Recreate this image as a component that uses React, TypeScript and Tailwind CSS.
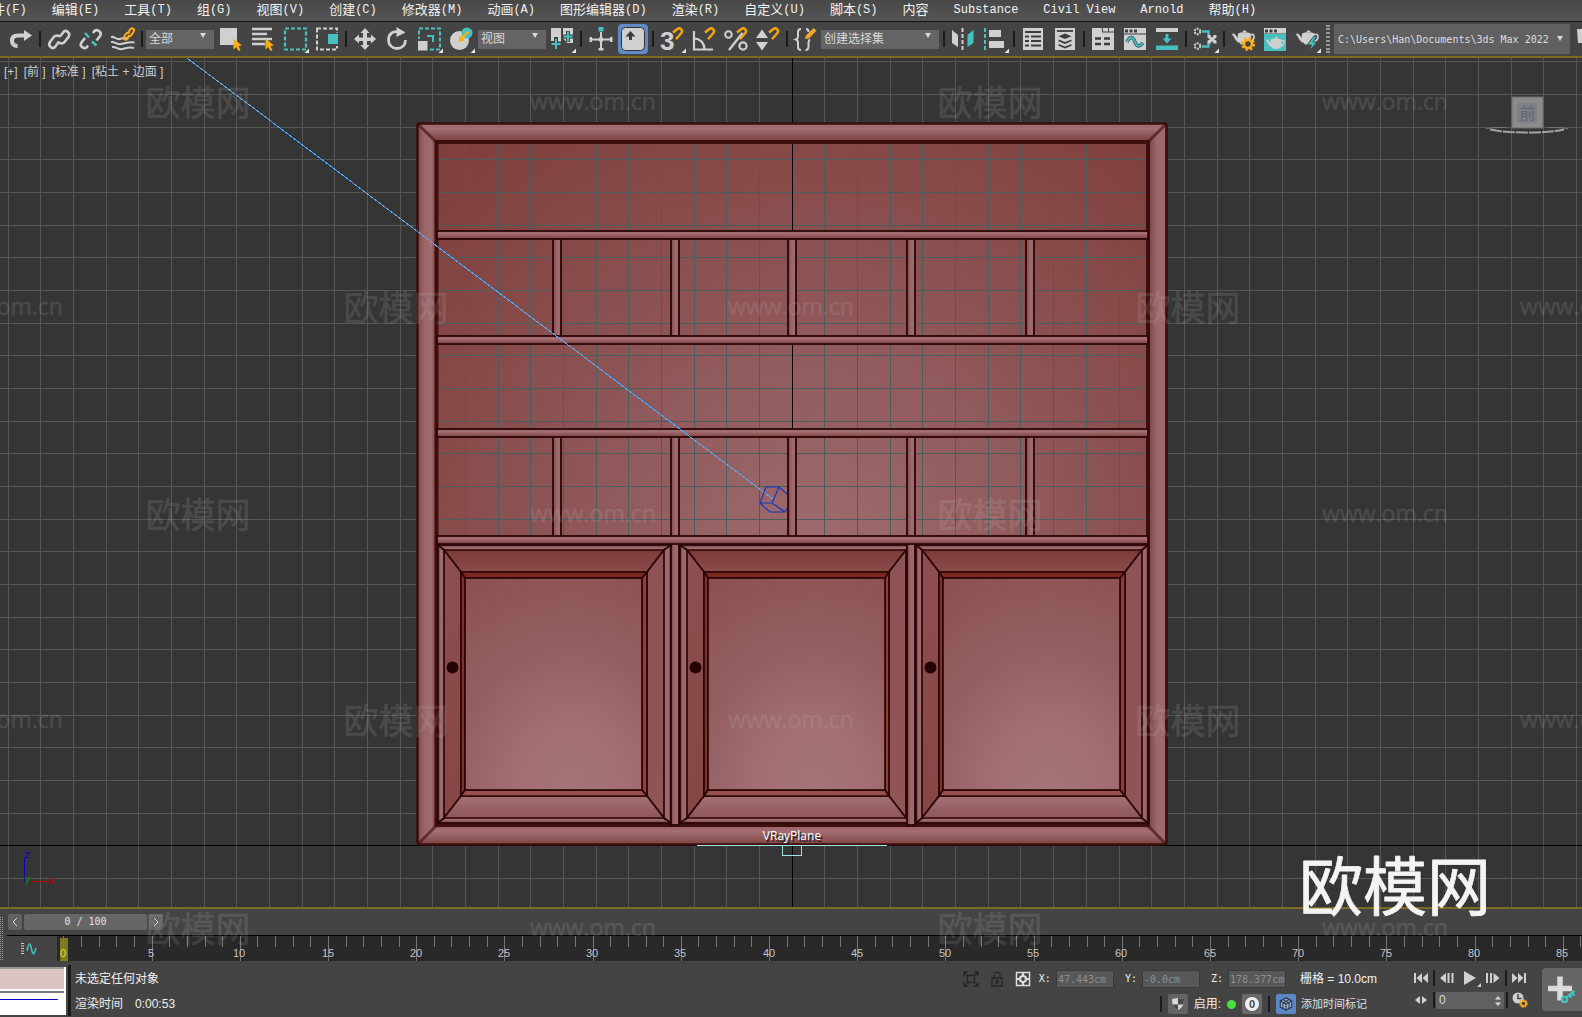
import type { ReactNode } from "react";

const LIGHT = "#d0d0d0";
const TEAL = "#46c0c0";
const AMBER = "#fbae17";
const EDGE = "#2c0606";

const menus = [
  { cn: "文件", en: "(F)" },
  { cn: "编辑", en: "(E)" },
  { cn: "工具", en: "(T)" },
  { cn: "组", en: "(G)" },
  { cn: "视图", en: "(V)" },
  { cn: "创建", en: "(C)" },
  { cn: "修改器", en: "(M)" },
  { cn: "动画", en: "(A)" },
  { cn: "图形编辑器", en: "(D)" },
  { cn: "渲染", en: "(R)" },
  { cn: "自定义", en: "(U)" },
  { cn: "脚本", en: "(S)" },
  { cn: "内容", en: "" },
  { cn: "", en: "Substance" },
  { cn: "", en: "Civil View" },
  { cn: "", en: "Arnold" },
  { cn: "帮助", en: "(H)" },
];

function MenuBar() {
  return (
    <nav className="flex h-[22px] shrink-0 items-center overflow-hidden border-b border-[#141414] bg-linear-to-b from-[#484848] to-[#555555] pb-0.5">
      <div className="-ml-[21px] flex gap-[25px]">
        {menus.map((m) => (
          <button key={m.cn + m.en} type="button" className="flex shrink-0 items-center whitespace-nowrap leading-4 text-[#f2f2f2]">
            {m.cn && <span className="text-[13px]">{m.cn}</span>}
            {m.en && <span className="font-['Liberation_Mono',monospace] text-xs">{m.en}</span>}
          </button>
        ))}
      </div>
    </nav>
  );
}

function Tool({ label, flyout, children }: { label: string; flyout?: boolean; children: ReactNode }) {
  return (
    <button type="button" aria-label={label} title={label} className="h-6 w-6 shrink-0">
      <svg viewBox="0 0 24 24" className="h-6 w-6 overflow-visible" fill="none">
        {children}
        {flyout && <path d="M26 21.500v4.500h-4.500z" fill="#e6e6e6" />}
      </svg>
    </button>
  );
}

function Sep({ className = "mx-1.5" }: { className?: string }) {
  return <span className={`h-4 w-0.5 shrink-0 bg-[#1c1c1c] ${className}`} />;
}

function Group({ children }: { children: ReactNode }) {
  return <div className="flex shrink-0 items-center gap-2">{children}</div>;
}

function Combo({ label, value, className }: { label: string; value: string; className: string }) {
  return (
    <div className={`relative shrink-0 ${className}`}>
      <select aria-label={label} className="h-full w-full appearance-none bg-[#646464] pb-px pl-[3px] text-xs text-[#d8d8d8] outline-none">
        <option>{value}</option>
      </select>
      <span className="pointer-events-none absolute inset-y-0 right-2 flex items-center text-[#d8d8d8]">
        <svg viewBox="0 0 6 5" className="h-[5px] w-1.5" fill="currentColor">
          <path d="M0 0h6L3 5z" />
        </svg>
      </span>
    </div>
  );
}

function Cursor() {
  return <path d="M14.500 11.500v11l2.800-2.400 2 4 2.200-1.100-2-4 3.500-.4z" fill={AMBER} />;
}

function Magnet() {
  return <path d="M13 5.500L17.500 2c2.500-1.800 5.800 1 4 3.800l-5.500 6.400" stroke="#f5a50f" strokeWidth="2.400" />;
}

function Teapot() {
  return (
    <g>
      <path d="M7 6.500c-1 4 0 8.500 3 11h7c2.500-2 4-6 2.500-11-3-1.700-9.500-1.700-12.500 0z" fill={LIGHT} />
      <path d="M11.500 5c0-2 4-2 4 0M.500 6.500l3 .3 5.500 7-1 2C4 14 3 9.500.500 6.500z" fill={LIGHT} />
      <path d="M19.500 8c3-1.500 4 .5 3.300 3-.6 2-2.600 3.500-4.800 4" stroke={LIGHT} strokeWidth="1.700" />
    </g>
  );
}

function Toolbar() {
  return (
    <div className="flex h-[34px] shrink-0 items-center overflow-hidden bg-[#444444] pl-[9px]">
      <Group>
        <Tool label="重做">
          <path d="M15 3v3.500H9C3.500 6.500 1 9.500 1 13.500c0 4.500 3 7.500 7.500 7.500v-4C6 17 5 15.500 5 13.500 5 11.500 6.500 10.500 9 10.500h6V14l8-5.500z" fill={LIGHT} />
        </Tool>
      </Group>
      <Sep />
      <Group>
        <Tool label="链接">
          <g stroke={LIGHT} strokeWidth="2.600">
            <path d="M13 9.500l3.500-4.500c2.500-2.600 7.500 1 5 5l-4 5c-1.600 2-4.500 2-6 .2" />
            <path d="M12 14.500L8 20c-2.500 2.600-7.600-1-5-5l4-5.200C9 8 11.500 8 13 9.800" />
          </g>
        </Tool>
        <Tool label="取消链接">
          <g stroke={LIGHT} strokeWidth="2.600">
            <path d="M14 6l1.500-2c3-2.600 8 1.500 5.500 5l-3.500 4.500" />
            <path d="M9 18.500L7.500 20.500c-3 2-7.500-1.500-5-5L6 11" />
          </g>
          <path d="M6 6l4 4.500M13 14.500l4.500 4" stroke={TEAL} strokeWidth="2.400" />
        </Tool>
        <Tool label="绑定到空间扭曲">
          <g stroke={LIGHT} strokeWidth="2">
            <path d="M0 10c4-1 5 3 9 2s6-2 8 0M0 15c4-1 5 3 10 2s8-2.500 13.500-1.500M1 20c4-1 5 3 10 2s7-2.500 12-1" />
          </g>
          <g stroke={AMBER} strokeWidth="2">
            <path d="M17.500 5l2-3c2-1.600 4.500.5 3.200 2.500L20 8.500c-1 1-2.500 1-3.400 0" />
            <path d="M18.500 6.500c-1.200-1-2.500-.8-3.500.3l-2 3c-1 2.200 1.500 3.700 3.200 2.400l1.500-2.200" />
          </g>
        </Tool>
      </Group>
      <Sep className="ml-1.5 mr-[3px]" />
      <Combo label="选择过滤器" value="全部" className="mb-2 mr-[5px] h-[19px] w-[68px]" />
      <Group>
        <Tool label="选择对象">
          <rect x="1" y="1" width="17" height="17" fill={LIGHT} />
          <Cursor />
        </Tool>
        <Tool label="按名称选择">
          <path d="M1 2h20M1 7h15M1 12h20M1 17h13" stroke={LIGHT} strokeWidth="2.400" />
          <Cursor />
        </Tool>
        <Tool label="矩形选择区域" flyout>
          <rect x="2" y="1.500" width="21" height="21" stroke={TEAL} strokeWidth="2.200" strokeDasharray="4 2" />
        </Tool>
        <Tool label="窗口/交叉">
          <rect x="2" y="1.500" width="20" height="21" stroke={LIGHT} strokeWidth="2" strokeDasharray="4 2" />
          <rect x="12" y="6" width="13" height="13" fill="#444444" />
          <rect x="13" y="7" width="10" height="10" fill={TEAL} />
        </Tool>
      </Group>
      <Sep />
      <Group>
        <Tool label="选择并移动">
          <path d="M12 1l4.500 5H14v4.500h4V7.500l5 4.500-5 4.500V14h-4v4h2.500L12 23l-4.500-5H10v-4H6v2.500L1 12l5-4.500v3h4V6H7.500z" fill={LIGHT} />
        </Tool>
        <Tool label="选择并旋转">
          <path d="M14 5c-6-1.500-10.500 2-10.500 8 0 5 3.500 8.500 8.500 8.500s8.500-3.500 8.500-8.500" stroke={LIGHT} strokeWidth="2.800" />
          <path d="M11.500 0l9 5.500-9 4.500z" fill={LIGHT} />
        </Tool>
        <Tool label="选择并缩放" flyout>
          <rect x="2" y="1.500" width="21" height="21" stroke={TEAL} strokeWidth="2" strokeDasharray="4 2" />
          <rect x="0" y="12" width="12" height="12" fill="#444444" />
          <rect x="1" y="14" width="9.500" height="9.500" fill={LIGHT} />
          <path d="M10 9h6v6" stroke={TEAL} strokeWidth="2" />
        </Tool>
        <Tool label="选择并放置" flyout>
          <circle cx="10.500" cy="13.500" r="9.500" fill={LIGHT} />
          <circle cx="18" cy="6" r="5.500" fill={TEAL} />
          <path d="M19.500 4.500L12 12" stroke={AMBER} strokeWidth="2.400" />
          <path d="M9.500 15l1-7 5.500 5.500z" fill={AMBER} />
        </Tool>
      </Group>
      <Combo label="参考坐标系" value="视图" className="mb-2 ml-[5px] mr-1 h-[19px] w-[68px]" />
      <Group>
        <Tool label="使用轴点中心" flyout>
          <path d="M1 1h10v17H8v-4H1zM13 1h10v15h-6l-4-5z" fill={LIGHT} />
          <path d="M6 10v11M2 16.500h9M18 4v11M13 9.500h10" stroke="#444444" strokeWidth="4" />
          <path d="M6 12v10M1.500 17h9M18 4.500v10M13.500 9.500h9" stroke={TEAL} strokeWidth="2" />
        </Tool>
      </Group>
      <Sep className="ml-1.5 mr-[7px]" />
      <Group>
        <Tool label="选择并操纵">
          <path d="M12 5v18M1 12.500h22" stroke={LIGHT} strokeWidth="2" />
          <path d="M9.500 21h5v2.500h-5zM.500 10H3v5H.500zM21 10h2.500v5H21zM10 10.500h4v4h-4z" fill={LIGHT} />
          <rect x="9.500" y="0" width="5" height="4.500" fill={TEAL} />
        </Tool>
        <button type="button" aria-label="键盘快捷键覆盖切换" className="-ml-[3px] flex h-[30px] w-[30px] items-center justify-center rounded-sm bg-[#5f8ac7]">
          <svg viewBox="0 0 24 24" className="h-6 w-6">
            <rect x=".500" y=".500" width="23" height="23" rx="4" fill={LIGHT} stroke="#333333" />
            <path d="M9.500 4l5 5.500H11V13H8V9.500H4.500z" fill="#3d3d3d" />
          </svg>
        </button>
      </Group>
      <Sep className="ml-1 mr-1.5" />
      <Group>
        <Tool label="捕捉开关" flyout>
          <text x="0" y="23" fontSize="26" fontWeight="700" fill={LIGHT} className="font-['Liberation_Sans',sans-serif]">3</text>
          <Magnet />
        </Tool>
        <Tool label="角度捕捉切换">
          <path d="M2 4v18.500h19" stroke={LIGHT} strokeWidth="2.200" />
          <path d="M2 11.500c6 0 10.500 4.500 10.500 11" stroke={LIGHT} strokeWidth="2.200" />
          <Magnet />
        </Tool>
        <Tool label="百分比捕捉切换">
          <circle cx="4.500" cy="7.500" r="3.300" stroke={LIGHT} strokeWidth="2" />
          <circle cx="19" cy="19" r="3.600" stroke={LIGHT} strokeWidth="2.200" />
          <path d="M18.500 6L5 23" stroke={LIGHT} strokeWidth="2.400" />
          <Magnet />
        </Tool>
        <Tool label="微调器捕捉切换">
          <path d="M6 2.500l6 8.500H0zM6 23.500l6-8.500H0z" fill={LIGHT} />
          <Magnet />
        </Tool>
      </Group>
      <Sep />
      <Group>
        <Tool label="编辑命名选择集">
          <path d="M7 2C4.500 2 4 3 4 5v4c0 2-.5 3-2 3.500 1.500.5 2 1.500 2 3.500v4c0 2 .5 3 3 3M12 2c1.500 0 2.500 1 2.500 3M16 12.500c-1 .5-1.500 1.500-1.500 3.500v4c0 2-.5 3-3 3" stroke={LIGHT} strokeWidth="2" />
          <path d="M11 12l1-3.500L19.500 1l3 2.500-7.500 8z" fill="#f5a528" />
        </Tool>
      </Group>
      <Combo label="命名选择集" value="创建选择集" className="mb-2 ml-[3px] h-[19px] w-[118px]" />
      <Sep className="ml-1 mr-1.5" />
      <Group>
        <Tool label="镜像">
          <path d="M1 3l6 5v12l-6-4z" fill={LIGHT} />
          <path d="M11.500 1v23" stroke={LIGHT} strokeWidth="2" strokeDasharray="4 2" />
          <path d="M22.500 3l-6 5v12l6-4z" fill={TEAL} />
        </Tool>
        <Tool label="对齐" flyout>
          <path d="M2 1v23" stroke={TEAL} strokeWidth="2" strokeDasharray="4 2" />
          <path d="M6 3h12v7H6zM6 14h15v7H6z" fill={LIGHT} />
        </Tool>
      </Group>
      <Sep />
      <Group>
        <Tool label="场景资源管理器">
          <rect x="2" y="1" width="20" height="22" fill={LIGHT} />
          <path d="M4 5h16M4 9.500h4M10 9.500h10M4 14h4M10 14h10M4 18.500h4M10 18.500h10" stroke="#3d3d3d" strokeWidth="2" />
        </Tool>
        <Tool label="层资源管理器">
          <rect x="2" y="1" width="20" height="22" fill={LIGHT} />
          <path d="M4 4h16" stroke="#3d3d3d" strokeWidth="1.800" />
          <path d="M12 6.500l6.500 2.700-6.500 2.700-6.500-2.700zM5.500 12.500l6.500 2.500 6.500-2.500v1.800L12 17l-6.500-2.700zM5.500 17l6.500 2.500 6.500-2.500v1.800l-6.500 2.700-6.500-2.700z" fill="#3d3d3d" />
        </Tool>
      </Group>
      <Sep />
      <Group>
        <Tool label="功能区">
          <path d="M1 1h10v4.500h12V23H1z" fill={LIGHT} />
          <path d="M12 1h5v3.500h-5zM18 1h5v3.500h-5z" fill={LIGHT} />
          <path d="M4 11.500h6M13 11.500h6M4 17h6M13 17h6" stroke="#3d3d3d" strokeWidth="2.500" />
        </Tool>
        <Tool label="曲线编辑器">
          <path d="M1 1h22v22H1z" fill={LIGHT} />
          <path d="M2 2.500h3v3H2zM6.500 2.500h3v3h-3zM11 2.500h3v3h-3zM1 6.500h22v1H1z" fill="#3d3d3d" />
          <path d="M4 15c3-6 6-6 8 0s5 4 8 1" stroke="#2f5f64" strokeWidth="3.600" />
          <path d="M4 15c3-6 6-6 8 0s5 4 8 1" stroke={TEAL} strokeWidth="1.800" />
        </Tool>
        <Tool label="切换面板">
          <path d="M1 1h22v4H1z" fill={LIGHT} />
          <path d="M1 18.500h22v4.500H1zM10.500 7h3v4.500h3L12 16.500l-4.500-5h3z" fill={TEAL} />
        </Tool>
      </Group>
      <Sep />
      <Group>
        <Tool label="图解视图" flyout>
          <path d="M9 4.500h6.500V8M9 19.500h6.500V16" stroke={TEAL} strokeWidth="2.400" />
          <g stroke={LIGHT} strokeWidth="2" strokeDasharray="2 1">
            <circle cx="4.500" cy="4.500" r="2.800" />
            <circle cx="4.500" cy="19" r="2.800" />
          </g>
          <path d="M14.500 8h2.800l1.700 3 1.700-3h2.800v2.700L21 12.200l2.500 1.500v2.800h-2.800L19 14l-1.700 2.500h-2.800v-2.800l2.500-1.500-2.500-1.500z" fill={LIGHT} />
        </Tool>
      </Group>
      <Sep />
      <Group>
        <Tool label="渲染设置">
          <Teapot />
          <circle cx="17" cy="17" r="4" fill="#444444" stroke={AMBER} strokeWidth="2.600" />
          <circle cx="17" cy="17" r="6" stroke={AMBER} strokeWidth="2" strokeDasharray="2.400 2.300" />
        </Tool>
        <Tool label="渲染帧窗口">
          <path d="M1 1h22v5.500H1z" fill={LIGHT} />
          <path d="M2 2.500h3v3H2zM6.500 2.500h3v3h-3zM11 2.500h3v3h-3z" fill="#3d3d3d" />
          <path d="M1 7h22v17H1z" fill={TEAL} />
          <svg x="2" y="7" width="20" height="17" viewBox="0 0 24 20">
            <Teapot />
          </svg>
        </Tool>
        <Tool label="渲染产品" flyout>
          <Teapot />
          <path d="M19 9l-7 9h4.500L14 24.500 22 15h-4l4-6z" fill={TEAL} stroke="#444444" strokeWidth="1" />
        </Tool>
      </Group>
      <span className="ml-[7px] mr-1 h-7 shrink-0 border-x-2 border-dotted border-[#9a9a9a]" />
      <div className="relative h-[30px] w-[236px] shrink-0">
        <select
          aria-label="项目文件夹"
          className="h-full w-full appearance-none bg-[#606060] pl-1 font-['DejaVu_Sans_Mono',monospace] text-[10px] text-[#dddddd] outline-none"
        >
          <option>C:\Users\Han\Documents\3ds Max 2022</option>
        </select>
        <svg viewBox="0 0 6 5" className="pointer-events-none absolute right-[7px] top-3 h-[5px] w-1.5" fill="#d8d8d8">
          <path d="M0 0h6L3 5z" />
        </svg>
      </div>
      <Tool label="更多">
        <path d="M7 2h6v14H8z" fill={LIGHT} />
      </Tool>
    </div>
  );
}

const STEP = 32.67;
const gridX = Array.from({ length: 49 }, (_, i) => Math.floor(792.3 + (i - 24) * STEP) + 0.5);
const gridY = Array.from({ length: 27 }, (_, i) => Math.floor(845.9 + (i - 24) * STEP) + 0.5);

const doors = [
  { ax: 438, bx: 444, cx: 461, dx: 465, dr: 642, cr: 647, br: 664, ar: 671 },
  { ax: 680, bx: 687, cx: 704, dx: 708, dr: 885, cr: 889, br: 906, ar: 912 },
  { ax: 916, bx: 922, cx: 939, dx: 943, dr: 1120, cr: 1125, br: 1142, ar: 1148 },
];

function Door({ d }: { d: (typeof doors)[number] }) {
  const a = { t: 545, b: 823 };
  const b = { t: 550, b: 818 };
  const c = { t: 572, b: 796 };
  const p = { t: 578, b: 790 };
  return (
    <g stroke={EDGE} strokeWidth="1.700">
      <rect x={d.ax} y={a.t} width={d.ar - d.ax} height={a.b - a.t} fill="#9d696c" />
      <rect x={d.ax + 1} y={a.t + 1} width={d.ar - d.ax - 2} height={a.b - a.t - 2} fill="none" strokeWidth="1" strokeOpacity=".45" />
      <path d={`M${d.ax} ${a.t}L${d.bx} ${b.t}M${d.ar} ${a.t}L${d.br} ${b.t}M${d.ax} ${a.b}L${d.bx} ${b.b}M${d.ar} ${a.b}L${d.br} ${b.b}`} />
      <path d={`M${d.bx} ${b.t}H${d.br}L${d.cr} ${c.t}H${d.cx}z`} fill="url(#bevelTop)" />
      <path d={`M${d.bx} ${b.t}L${d.cx} ${c.t}V${c.b}L${d.bx} ${b.b}z`} fill="url(#bevelLeft)" />
      <path d={`M${d.br} ${b.t}L${d.cr} ${c.t}V${c.b}L${d.br} ${b.b}z`} fill="url(#bevelRight)" />
      <path d={`M${d.bx} ${b.b}H${d.br}L${d.cr} ${c.b}H${d.cx}z`} fill="url(#bevelBottom)" />
      <path d={`M${d.cx} ${c.t}H${d.cr}L${d.dr} ${p.t}H${d.dx}z`} fill="#7a2820" />
      <path d={`M${d.cx} ${c.t}L${d.dx} ${p.t}V${p.b}L${d.cx} ${c.b}z`} fill="#80302a" />
      <path d={`M${d.cr} ${c.t}L${d.dr} ${p.t}V${p.b}L${d.cr} ${c.b}z`} fill="#8f3f36" />
      <path d={`M${d.cx} ${c.b}H${d.cr}L${d.dr} ${p.b}H${d.dx}z`} fill="#98504d" />
      <rect x={d.dx} y={p.t} width={d.dr - d.dx} height={p.b - p.t} fill="url(#panel)" />
      <circle cx={d.bx + 8.500} cy="667.500" r="6" fill="#250303" stroke="none" />
    </g>
  );
}

function Scene() {
  return (
    <svg viewBox="0 58 1582 849" preserveAspectRatio="xMidYMid slice" className="absolute inset-0 h-full w-full" fill="none">
      <defs>
        <radialGradient id="back" gradientUnits="userSpaceOnUse" cx="820" cy="560" r="600">
          <stop offset="0" stopColor="#9f6c6f" />
          <stop offset=".35" stopColor="#915a5c" />
          <stop offset=".7" stopColor="#854846" />
          <stop offset="1" stopColor="#7e3b38" />
        </radialGradient>
        <radialGradient id="panel" cx=".6" cy="1" r="1.150">
          <stop offset="0" stopColor="#a57478" />
          <stop offset=".25" stopColor="#a27074" />
          <stop offset=".6" stopColor="#945e60" />
          <stop offset="1" stopColor="#8a5151" />
        </radialGradient>
        <linearGradient id="bevelTop" x2="0" y2="1">
          <stop stopColor="#7d3b38" />
          <stop offset="1" stopColor="#8b4c4c" />
        </linearGradient>
        <linearGradient id="bevelLeft" x2="0" y2="1">
          <stop stopColor="#8d4f50" />
          <stop offset="1" stopColor="#854644" />
        </linearGradient>
        <linearGradient id="bevelRight" x2="0" y2="1">
          <stop stopColor="#8e5354" />
          <stop offset="1" stopColor="#8f5656" />
        </linearGradient>
        <linearGradient id="bevelBottom" x2="0" y2="1">
          <stop stopColor="#a37175" />
          <stop offset="1" stopColor="#8e5557" />
        </linearGradient>
        <linearGradient id="rail" x2="0" y2="1">
          <stop stopColor="#9a6063" />
          <stop offset=".3" stopColor="#a37074" />
          <stop offset="1" stopColor="#7e403f" />
        </linearGradient>
        <linearGradient id="stile" x2="1" y2="0">
          <stop stopColor="#7e4444" />
          <stop offset=".4" stopColor="#996568" />
          <stop offset=".8" stopColor="#9f6c6f" />
          <stop offset="1" stopColor="#87494a" />
        </linearGradient>
      </defs>

      <g stroke="#565656" shapeRendering="crispEdges">
        {gridX.map((x) => <path key={x} d={`M${x} 58V908`} />)}
        {gridY.map((y) => <path key={y} d={`M0 ${y}H1582`} />)}
      </g>
      <path d="M792.500 58V908M0 845.500H1582" stroke="#000000" shapeRendering="crispEdges" />

      {/* back board with the grid showing through */}
      <rect x="434" y="140" width="716" height="400" fill="url(#back)" />
      <g stroke="#4b5e5e" shapeRendering="crispEdges">
        {gridX.filter((x) => x > 439 && x < 1147).map((x) => <path key={x} d={`M${x} 144V540`} />)}
        {gridY.filter((y) => y > 144 && y < 540).map((y) => <path key={y} d={`M438 ${y}H1148`} />)}
      </g>
      <path d="M792.500 144V540" stroke="#000000" shapeRendering="crispEdges" />

      {/* outer frame */}
      <path d="M417 123H1167L1149 141H435z" fill="url(#rail)" />
      <path d="M417 845H1167L1149 826H435z" fill="url(#rail)" />
      <path d="M417 123L435 141V826L417 845z" fill="url(#stile)" />
      <path d="M1167 123L1149 141V826L1167 845z" fill="url(#stile)" />
      <rect x="435" y="540" width="715" height="286" fill="#3a0b0a" />
      <g stroke="#3a0f0e">
        <rect x="417.500" y="123.500" width="749" height="721" rx="2" strokeWidth="2.600" />
        <rect x="436.500" y="142" width="711.500" height="683" strokeWidth="4" />
        <path d="M418 124l18 18M1166 124l-18 18M418 844l18-18M1166 844l-18-18" strokeWidth="3" strokeOpacity=".6" />
      </g>

      {doors.map((d) => <Door key={d.ax} d={d} />)}

      {/* shelves and dividers */}
      <g stroke={EDGE} strokeWidth="1.800">
        {[553, 671, 788, 907, 1026].map((x) => (
          <g key={x}>
            <rect x={x} y="238" width="8" height="98" fill="url(#stile)" />
            <rect x={x} y="436" width="8" height="101" fill="url(#stile)" />
          </g>
        ))}
        {[671, 907].map((x) => <rect key={x} x={x} y="540" width="8" height="285" fill="url(#stile)" />)}
        {[231, 336, 429, 536].map((y) => <rect key={y} x="437" y={y} width="711" height="8" fill="url(#rail)" />)}
      </g>

      {/* target line and helper */}
      <path d="M187 58L774 500" stroke="#4fa9f5" shapeRendering="crispEdges" />
      <path d="M787 494l-8-7h-13l-6 16 10 9h15l2-4M760 503h12l7-16M772 503l13 9" stroke="#1238c0" strokeWidth="1.200" />

      {/* light gizmo */}
      <path d="M697 845.500H887M782.500 846v9.500h19V846" stroke="#9fe6e2" shapeRendering="crispEdges" />
      <g fontSize="12" textAnchor="middle" className="font-['Open_Sans',sans-serif]">
        <text x="793.500" y="841.500" fill="#222222">VRayPlane</text>
        <text x="792" y="840" fill="#ffffff">VRayPlane</text>
      </g>

      {/* world axis */}
      <g shapeRendering="crispEdges">
        <path d="M24.500 858v24" stroke="#0606b8" />
        <path d="M30 881.500h21" stroke="#b00808" />
      </g>
      <g fontSize="11" className="font-['DejaVu_Sans',sans-serif]">
        <text x="24" y="858" fill="#0606b8">z</text>
        <text x="24" y="883" fill="#089008">y</text>
        <text x="49" y="884" fill="#b00808">x</text>
      </g>

      {/* view cube */}
      <path d="M1486 128.500c8-1 12-1 20-1M1568 128.500c-8-1-12-1-20-1" stroke="#77797c" />
      <path d="M1490 129.500c12 2.500 22 3 37 3s25-.5 37-3" stroke="#9fa2a6" strokeWidth="2" strokeDasharray="12 1" />
      <rect x="1512" y="97" width="31" height="31" fill="#8b8b8b" stroke="#6c6c6c" />
      <rect x="1517" y="103" width="20" height="20" fill="#7d8086" />
      <text x="1527.500" y="119" fontSize="16" textAnchor="middle" fill="#62656c">前</text>
    </svg>
  );
}

function Viewport() {
  return (
    <main className="relative min-h-0 flex-1 overflow-hidden border-y-2 border-[#7d6b22] bg-[#353535]">
      <Scene />
      <div className="absolute left-1 top-1 flex gap-1.5 text-xs leading-5 text-[#cccccc]">
        <button type="button">[+]</button>
        <button type="button">[前 ]</button>
        <button type="button">[标准 ]</button>
        <button type="button">[粘土 + 边面 ]</button>
      </div>
    </main>
  );
}

const PITCH = 17.64;
const FRAMES = 88;

function Timeline() {
  return (
    <section className="flex h-[52px] shrink-0 bg-[#444444]">
      <div className="mt-2 h-[43px] w-[3px] border-x border-dotted border-[#9a9a9a]" />
      <div className="ml-1 flex min-w-0 flex-1 flex-col">
        <div className="flex h-[26px] items-center gap-0.5 pl-px text-xs text-[#e0e0e0]">
          <button type="button" aria-label="上一帧" className="flex h-4 w-3.5 items-center justify-center rounded-xs bg-[#616161]">
            <svg viewBox="0 0 6 8" className="h-2 w-1.5" fill="none" stroke="#dddddd"><path d="M5 0L1 4l4 4" /></svg>
          </button>
          <button type="button" className="h-4 w-[123px] rounded-xs bg-[#666666] font-['DejaVu_Sans_Mono',monospace] text-[10px] leading-4">0 / 100</button>
          <button type="button" aria-label="下一帧" className="flex h-4 w-3.5 items-center justify-center rounded-xs bg-[#616161]">
            <svg viewBox="0 0 6 8" className="h-2 w-1.5" fill="none" stroke="#dddddd"><path d="M1 0l4 4-4 4" /></svg>
          </button>
        </div>
        <div className="flex h-[26px] border-t border-black">
          <button type="button" aria-label="打开迷你曲线编辑器" className="flex w-[50px] shrink-0 items-center pl-3.5">
            <svg viewBox="0 0 16 12" className="h-3 w-4" fill="none">
              <path d="M1.500 0v12" stroke="#cccccc" strokeWidth="3" strokeDasharray="1 1.500" />
              <path d="M6 8C8-1 9-1 10.500 6s2.500 6 4.500-1" stroke={TEAL} strokeWidth="1.500" />
            </svg>
          </button>
          <svg className="h-[25px] min-w-0 flex-1 bg-[#292929]">
            <rect x="3" y="2" width="8" height="23" fill="#7f7a1f" />
            {Array.from({ length: FRAMES }, (_, i) => {
              const x = Math.round(6.4 + i * PITCH) + 0.5;
              return <path key={i} d={`M${x} 0V${i % 5 ? 11 : 25}`} stroke="#777777" />;
            })}
            {Array.from({ length: Math.ceil(FRAMES / 5) }, (_, i) => (
              <text
                key={i}
                x={Math.round(6 + i * 5 * PITCH)}
                y="21"
                fontSize="11"
                textAnchor="middle"
                fill={i ? "#c4c4c4" : "#e6e02a"}
              >
                {i * 5}
              </text>
            ))}
          </svg>
        </div>
      </div>
    </section>
  );
}

function Coord({ axis, value }: { axis: string; value: string }) {
  return (
    <label className="flex items-center gap-[5px] font-['DejaVu_Sans_Mono',monospace] text-[10px] text-[#f0f0f0]">
      {axis}:
      <input readOnly defaultValue={value} className="h-[18px] w-[58px] border border-[#3a3a3a] bg-[#585858] pl-px text-[#8f8f8f] outline-none" />
    </label>
  );
}

function NavButton({ label, children }: { label: string; children: ReactNode }) {
  return (
    <button type="button" aria-label={label} className="h-3 w-4 shrink-0">
      <svg viewBox="0 0 16 12" className="h-3 w-4 overflow-visible" fill={LIGHT}>{children}</svg>
    </button>
  );
}

function StatusBar() {
  return (
    <footer className="flex h-14 shrink-0 bg-[#444444] text-xs text-[#f0f0f0]">
      <div className="mt-1.5 flex h-12 w-[66px] shrink-0 flex-col border-r-2 border-white">
        <div className="h-6 border-y-2 border-t-[#999999] border-b-white bg-[#dcc4c4]" />
        <div className="h-6 border-t-2 border-[#777777] bg-white pr-1.5 pt-1.5">
          <div className="h-px bg-[#0606c8]" />
        </div>
      </div>
      <div className="ml-0.5 mt-1 h-[51px] w-[3px] border-l border-r-2 border-[#1a1a1a]" />
      <div className="flex flex-col pl-1 pt-2 leading-5">
        <span>未选定任何对象</span>
        <span className="mt-[5px]">渲染时间<span className="ml-3">0:00:53</span></span>
      </div>

      <div className="ml-auto flex flex-col items-end pt-[7px]">
        <div className="flex h-[22px] items-center">
          <button type="button" aria-label="孤立当前选择" className="mr-3 h-4 w-4">
            <svg viewBox="0 0 16 16" fill="none" stroke="#262626" strokeWidth="1.300">
              <path d="M1 5V1h4M11 1h4v4M15 11v4h-4M5 15H1v-4M4.500 4.500h7v7h-7zM1 1l3 3M15 1l-3 3M1 15l3-3M15 15l-3-3" />
            </svg>
          </button>
          <button type="button" aria-label="选择锁定切换" className="mr-3 h-4 w-3">
            <svg viewBox="0 0 12 16" fill="none" stroke="#262626" strokeWidth="1.300">
              <path d="M1 7h10v8H1zM3 7V4.500C3 0 9 0 9 4.500V7M6 10v3" />
              <circle cx="6" cy="10.500" r="1" fill="#262626" />
            </svg>
          </button>
          <button type="button" aria-label="绝对模式变换输入" className="mr-2 h-4 w-4">
            <svg viewBox="0 0 16 16" fill="none" stroke="#dddddd">
              <path d="M1.500 1.500h13v13h-13z" strokeWidth="1.500" />
              <circle cx="8" cy="8" r="3" strokeWidth="2.200" />
              <path d="M8 2v3M8 11v3M2 8h3M11 8h3" strokeWidth="2.200" />
            </svg>
          </button>
          <div className="flex gap-[11px]">
            <Coord axis="X" value="47.443cm" />
            <Coord axis="Y" value="-0.0cm" />
            <Coord axis="Z" value="178.377cm" />
          </div>
          <span className="ml-3.5 w-[79px] whitespace-nowrap">栅格 = 10.0cm</span>
        </div>
        <div className="mt-[3px] flex h-[22px] items-center pr-3">
          <Sep className="mr-1.5" />
          <button type="button" aria-label="安全" className="mr-1.5 flex h-5 w-5 items-center justify-center rounded-xs bg-[#646464]">
            <svg viewBox="0 0 12 12" className="h-3 w-3">
              <path d="M0 1l6-1 6 1c0 6-2 9-6 11C2 10 0 7 0 1z" fill="#d8d8d8" />
              <path d="M6 0l6 1c0 2-.2 4-.8 5.500H6zM.8 6.500H6V12C3 10.500 1.500 9 .8 6.500z" fill="#4a4a4a" />
            </svg>
          </button>
          <span>启用:</span>
          <span className="mx-1.5 h-[9px] w-[9px] rounded-full bg-[#4ade3c]" />
          <button type="button" className="flex h-5 w-5 items-center justify-center rounded-xs bg-[#6a6a6a]">
            <span className="h-3.5 w-3.5 rounded-full bg-[#f0f0f0] text-center text-[11px] font-bold leading-3.5 text-[#4a4a4a]">0</span>
          </button>
          <Sep className="mx-1.5" />
          <button type="button" aria-label="时间标记" className="flex h-5 w-5 items-center justify-center rounded-xs bg-[#5b88c4]">
            <svg viewBox="0 0 16 16" className="h-3.5 w-3.5" fill="none" stroke="#2a3a52" strokeWidth="1.300">
              <path d="M8 1l6.500 3.500v7L8 15l-6.500-3.500v-7z" fill="#9fb4d0" />
              <path d="M1.500 4.500L8 8l6.500-3.500M8 8v7M4.500 3l7 4v6M11.500 3l-7 4v6" />
            </svg>
          </button>
          <button type="button" className="ml-[5px] whitespace-nowrap text-[11px] text-[#e0e0e0]">添加时间标记</button>
        </div>
      </div>

      <div className="ml-[34px] flex flex-col pt-[9px]">
        <div className="flex h-4 items-center">
          <NavButton label="转至开头"><path d="M1 1h2v10H1zM9 1v10L3.500 6zM15 1v10L9.500 6z" /></NavButton>
          <Sep className="ml-1 mr-1" />
          <NavButton label="上一帧"><path d="M7 1v10L1 6zM8.500 1h2v10h-2zM12.500 1h2v10h-2z" /></NavButton>
          <span className="w-2" />
          <NavButton label="播放动画"><path d="M1-1l12 7-12 7zM18 11v4h-4z" /></NavButton>
          <span className="w-1.5" />
          <NavButton label="下一帧"><path d="M1 1h2v10H1zM5 1h2v10H5zM8.500 1v10l6-5z" /></NavButton>
          <Sep className="mx-1" />
          <NavButton label="转至结尾"><path d="M1 1v10l5.500-5zM7 1v10l5.500-5zM13 1h2v10h-2z" /></NavButton>
        </div>
        <div className="mt-[5px] flex h-[18px] items-center">
          <NavButton label="关键点模式切换"><path d="M7 2v8L2 6zM9 2v8l5-4z" /></NavButton>
          <Sep className="ml-1 mr-px" />
          <div className="relative">
            <input aria-label="当前帧" defaultValue="0" className="h-[17px] w-[68px] bg-[#606060] pl-[3px] text-xs text-[#d8d8d8] outline-none" />
            <svg viewBox="0 0 6 10" className="pointer-events-none absolute right-[3px] top-1 h-2.5 w-1.5" fill="#d8d8d8">
              <path d="M3 0l3 3.500H0zM3 10l3-3.500H0z" />
            </svg>
          </div>
          <Sep className="ml-0.5 mr-1" />
          <button type="button" aria-label="时间配置" className="h-4 w-4">
            <svg viewBox="0 0 16 16" fill="none">
              <circle cx="6" cy="6" r="5.500" fill={LIGHT} />
              <path d="M6 2v4.500h3.500" stroke="#444444" strokeWidth="1.500" />
              <circle cx="11.500" cy="11.500" r="2.600" fill="#444444" stroke={AMBER} strokeWidth="1.800" />
              <circle cx="11.500" cy="11.500" r="4" stroke={AMBER} strokeDasharray="1.500 1.500" />
            </svg>
          </button>
        </div>
      </div>
      <button type="button" aria-label="设置关键点" className="ml-3.5 mt-[7px] flex h-[43px] w-10 shrink-0 items-center justify-center rounded-l-sm bg-[#666666]">
        <svg viewBox="0 0 30 30" className="h-[30px] w-[30px]" fill="none">
          <path d="M13 1.500v24M1 13.500h24" stroke="#dcdcdc" strokeWidth="5.500" />
          <circle cx="17.500" cy="24.500" r="2.600" stroke={TEAL} strokeWidth="2.400" />
          <path d="M19.500 22.500l8-6.500M25 18l2.500 2.500M22.500 20l2 2.500" stroke={TEAL} strokeWidth="2.400" />
        </svg>
      </button>
    </footer>
  );
}

function Watermarks() {
  const rows = [103, 308, 515, 721, 929];
  return (
    <svg viewBox="0 0 1582 1017" preserveAspectRatio="xMidYMid slice" className="pointer-events-none absolute inset-0 h-full w-full">
      <g fill="#c8c8c8" stroke="#c8c8c8" strokeLinejoin="round" opacity=".14" textAnchor="middle">
        {rows.map((y, r) => {
          const shift = r % 2 ? 198 : 0;
          return (
            <g key={y}>
              {[198, 990].map((x) => <text key={x} x={x + shift} y={y + 13} fontSize="35" strokeWidth=".600">欧模网</text>)}
              {[593, 1385, -198].map((x) => (
                <text key={x} x={x + shift} y={y + 7} fontSize="23" strokeWidth=".600" className="font-['Open_Sans',sans-serif]">www.om.cn</text>
              ))}
            </g>
          );
        })}
      </g>
      <text x="1395" y="910" fontSize="64" textAnchor="middle" fill="#f4f4f4" stroke="#f4f4f4" strokeWidth=".800" strokeLinejoin="round">欧模网</text>
    </svg>
  );
}

export default function App() {
  return (
    <div className="relative flex h-screen flex-col overflow-hidden bg-[#444444] font-['Liberation_Sans','Noto_Sans_CJK_SC',sans-serif]">
      <MenuBar />
      <Toolbar />
      <Viewport />
      <Timeline />
      <StatusBar />
      <Watermarks />
    </div>
  );
}
